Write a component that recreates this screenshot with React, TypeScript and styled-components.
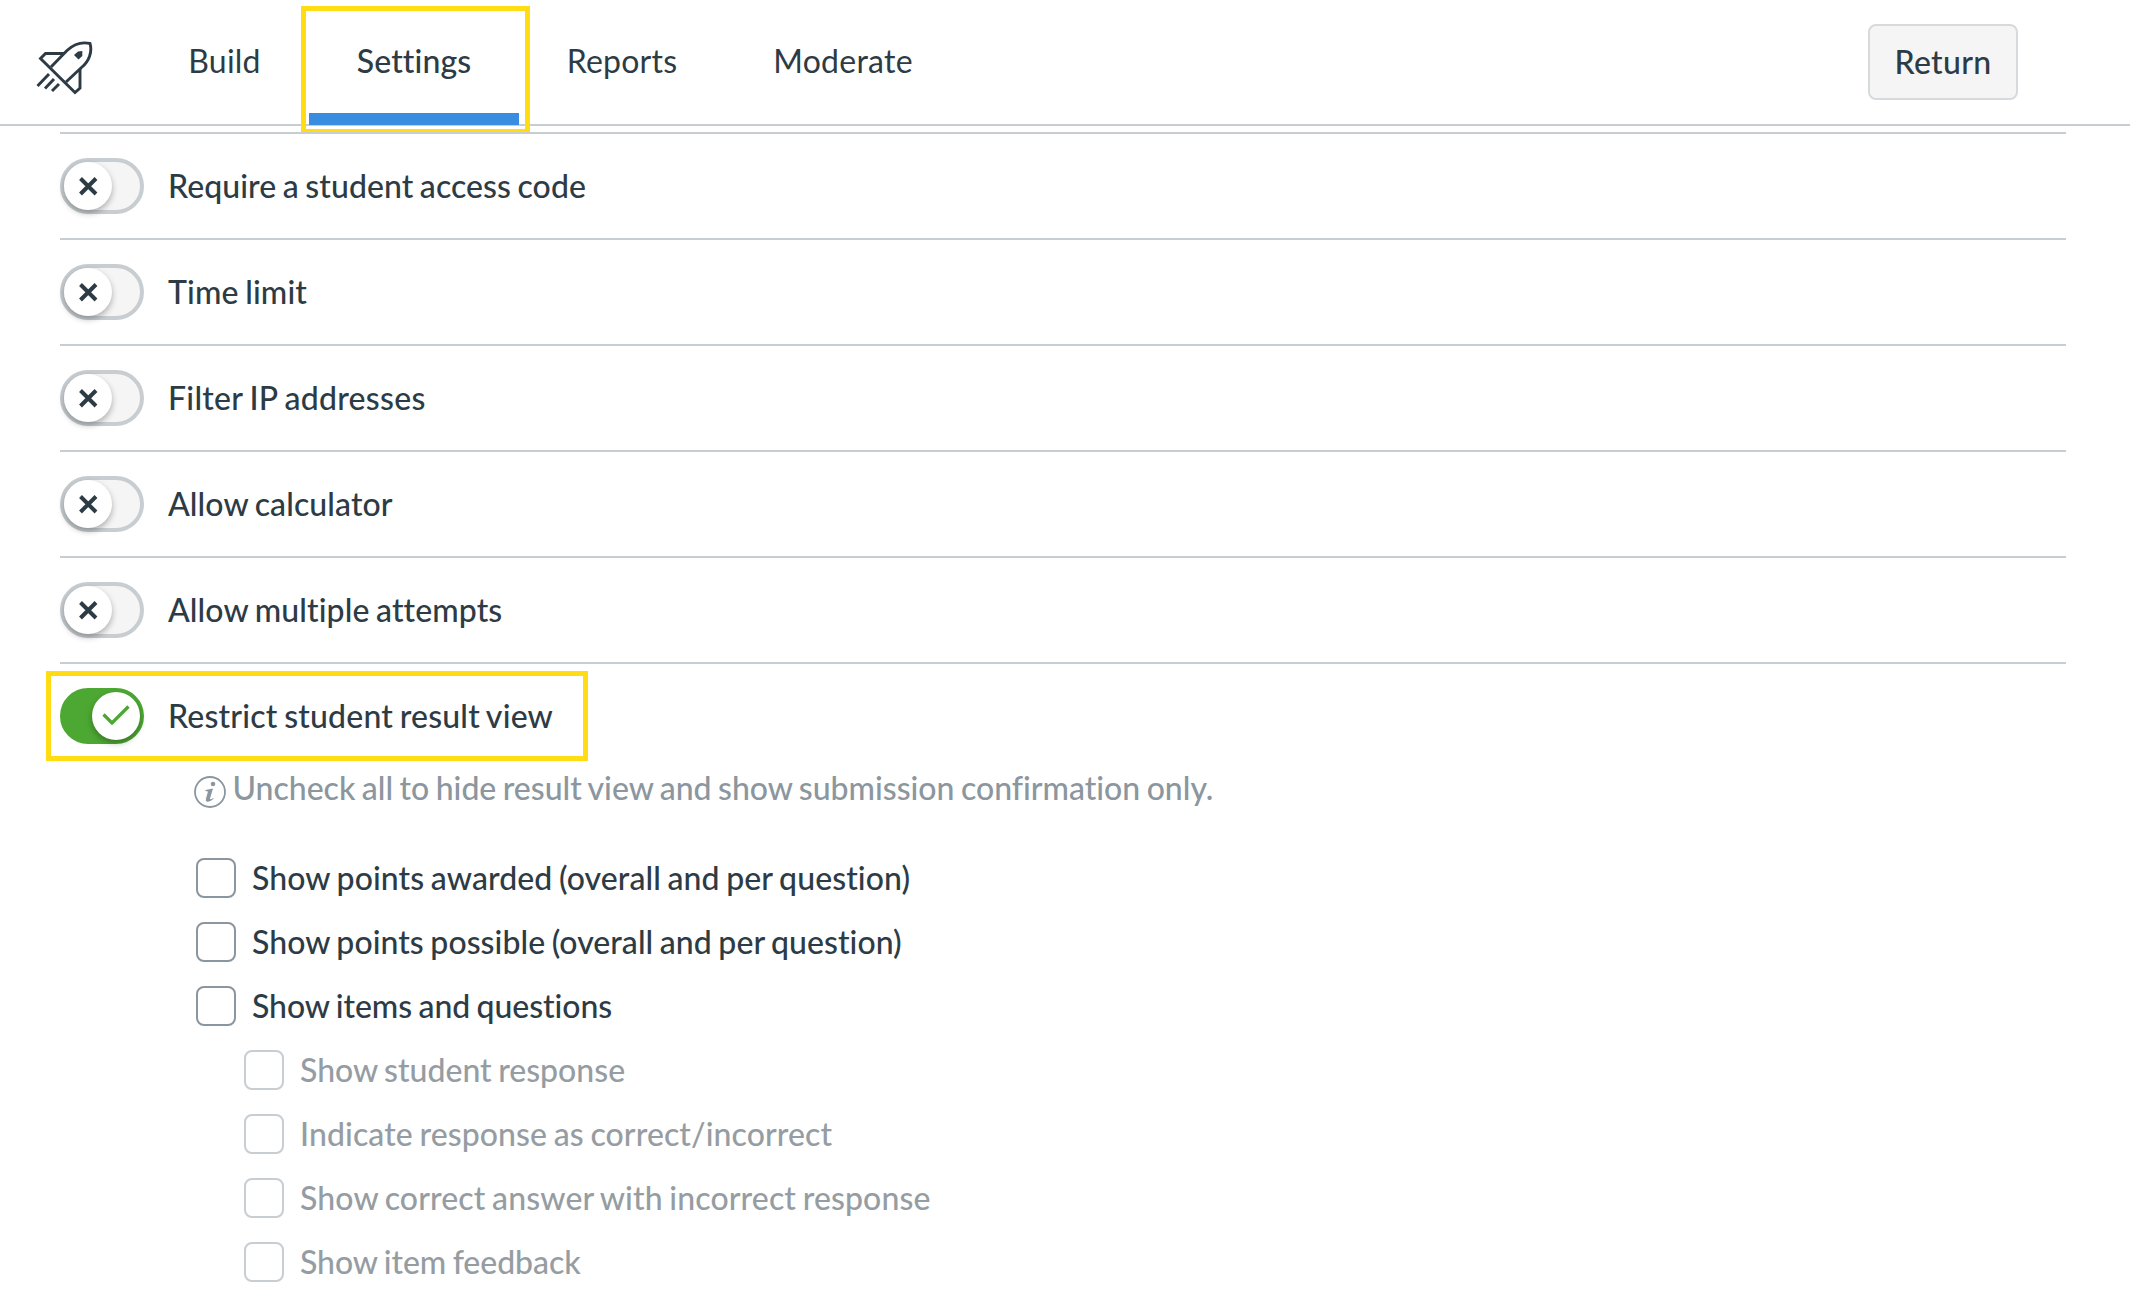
import React from "react";
import styled, { createGlobalStyle } from "styled-components";

const ink = "#2d3b45";
const line = "#c7cdd1";

const GlobalStyle = createGlobalStyle`
  * { box-sizing: border-box; }
  body {
    margin: 0;
    background: #fff;
    color: ${ink};
    font-family: Lato, "Liberation Sans", sans-serif;
    font-size: 32px;
    line-height: 40px;
    font-variant-ligatures: none;
  }
`;

const Page = styled.div`
  width: 2130px;
  height: 1300px;
  overflow: hidden;
`;

const Header = styled.header`
  display: flex;
  height: 126px;
  border-bottom: 2px solid ${line};
  padding: 0 112px 0 36px;
`;

const Logo = styled.svg`
  width: 57px;
  height: 54px;
  margin: 41px 49px 0 0;
`;

const Tabs = styled.nav`
  display: flex;
  flex: 1;
`;

const Tab = styled.div<{ $width: number; $active?: boolean }>`
  position: relative;
  display: flex;
  justify-content: center;
  width: ${(p) => p.$width}px;
  height: 125px;
  padding-top: 41px;
  font-weight: ${(p) => (p.$active ? 500 : 400)};
  border-bottom: 12px solid ${(p) => (p.$active ? "#388de0" : "transparent")};

  &:first-child {
    margin-right: 2px;
  }
`;

const TabHighlight = styled.div`
  position: absolute;
  left: -8px;
  top: 6px;
  width: 229px;
  height: 128px;
  border: 5px solid #ffdc14;
`;

const ReturnButton = styled.button`
  width: 150px;
  height: 76px;
  margin-top: 24px;
  padding: 0;
  border: 2px solid #d7dadc;
  border-radius: 8px;
  background: #f5f5f5;
  color: ${ink};
  font: 500 32px/40px Lato, "Liberation Sans", sans-serif;
  letter-spacing: 0.3px;
`;

const Settings = styled.main`
  margin: 6px 64px 0 60px;
`;

const SettingRow = styled.div`
  position: relative;
  display: flex;
  align-items: center;
  gap: 24px;
  height: 106px;
  border-top: 2px solid ${line};
  font-weight: 500;
`;

const RowHighlight = styled.div`
  position: absolute;
  left: -14px;
  top: 7px;
  width: 542px;
  height: 90px;
  border: 5px solid #ffdc14;
`;

const Track = styled.span<{ $on?: boolean }>`
  display: flex;
  justify-content: ${(p) => (p.$on ? "flex-end" : "flex-start")};
  width: 84px;
  height: 56px;
  border: 4px solid ${(p) => (p.$on ? "#4ca832" : line)};
  border-radius: 28px;
  background: ${(p) => (p.$on ? "#4ca832" : "#f5f5f5")};
`;

const Knob = styled.span`
  display: flex;
  align-items: center;
  justify-content: center;
  width: 48px;
  height: 48px;
  border-radius: 50%;
  background: #fff;
  box-shadow: 0 3px 6px rgba(0, 0, 0, 0.3);
`;

const Hint = styled.div`
  display: flex;
  gap: 6.5px;
  height: 40px;
  margin: 0 0 50px 134px;
  color: #8b969e;
  font-weight: 500;
`;

const InfoIcon = styled.svg`
  width: 32px;
  height: 32px;
  margin-top: 8px;
`;

const Options = styled.div`
  display: flex;
  flex-direction: column;
  gap: 24px;
  padding-left: 136px;
`;

const Option = styled.label<{ $disabled?: boolean }>`
  display: flex;
  align-items: center;
  gap: 16px;
  height: 40px;
  margin-left: ${(p) => (p.$disabled ? 48 : 0)}px;
  color: ${(p) => (p.$disabled ? "#969da2" : ink)};
  font-weight: 500;
`;

const Box = styled.span<{ $disabled?: boolean }>`
  width: 40px;
  height: 40px;
  border: 2px solid ${(p) => (p.$disabled ? line : "#8b969e")};
  border-radius: 8px;
`;

const Label = styled.span<{ $spacing?: number }>`
  letter-spacing: ${(p) => p.$spacing ?? 0}px;
  word-spacing: -1.6px;
  white-space: nowrap;
`;

const Toggle = ({ on }: { on?: boolean }) => (
  <Track $on={on}>
    <Knob>
      {on ? (
        <svg width="28" height="22" viewBox="0 0 28 22" fill="none" stroke="#4ca832" strokeWidth="3.3">
          <path d="M1.5 9.5 10 18 26.5 1.5" />
        </svg>
      ) : (
        <svg width="20" height="20" viewBox="0 0 20 20" fill="none" stroke={ink} strokeWidth="4">
          <path d="M2.5 2.5 18 18M18 2.5 2.5 18" />
        </svg>
      )}
    </Knob>
  </Track>
);

const settings = [
  { text: "Require a student access code", spacing: 0.06 },
  { text: "Time limit", spacing: 0.12 },
  { text: "Filter IP addresses", spacing: 0.29 },
  { text: "Allow calculator", spacing: 0.1 },
  { text: "Allow multiple attempts", spacing: 0.1 },
];

const options = [
  { text: "Show points awarded (overall and per question)", spacing: 0.09 },
  { text: "Show points possible (overall and per question)", spacing: 0.05 },
  { text: "Show items and questions", spacing: -0.06 },
  { text: "Show student response", spacing: 0, disabled: true },
  { text: "Indicate response as correct/incorrect", spacing: 0.1, disabled: true },
  { text: "Show correct answer with incorrect response", spacing: 0.125, disabled: true },
  { text: "Show item feedback", spacing: -0.06, disabled: true },
];

export default function App() {
  return (
    <Page>
      <GlobalStyle />
      <Header>
        <Logo viewBox="36 41 57 54" fill="none" stroke={ink} strokeWidth="2.9">
          <path d="M51 67 67 50.5C74 44 81 41.5 90 43.5 92.5 52 89 61 82 67L66 82" />
          <path d="M64 53.5H45.5L40.5 58.5 75 92.5 80 88V69" />
          <path d="M49 74 37.5 86M54 79 45 88.5M59 84 52 91" />
          <path d="M74 55 78 51.5 82.3 51 82.3 56 78.5 59.5Z" fill={ink} stroke="none" />
        </Logo>
        <Tabs>
          <Tab $width={165}><Label $spacing={0.25}>Build</Label></Tab>
          <Tab $width={210} $active>
            <Label $spacing={0.1}>Settings</Label>
            <TabHighlight />
          </Tab>
          <Tab $width={206}><Label $spacing={0.25}>Reports</Label></Tab>
          <Tab $width={236}><Label $spacing={0.25}>Moderate</Label></Tab>
        </Tabs>
        <ReturnButton>Return</ReturnButton>
      </Header>
      <Settings>
        {settings.map((s) => (
          <SettingRow key={s.text}>
            <Toggle />
            <Label $spacing={s.spacing}>{s.text}</Label>
          </SettingRow>
        ))}
        <SettingRow>
          <Toggle on />
          <Label $spacing={0.19}>Restrict student result view</Label>
          <RowHighlight />
        </SettingRow>
        <Hint>
          <InfoIcon viewBox="0 0 32 32" fill="none" stroke="#8b969e" strokeWidth="1.8">
            <circle cx="16" cy="16" r="15" />
            <circle cx="19" cy="8" r="2.3" fill="#8b969e" stroke="none" />
            <path d="M11.5 14 19 12.5 16 22.5Q15.7 24.3 19.5 22L19.7 22.8Q15.5 26.5 12.7 25.5 11.2 24.8 12 22.5L14 15.5 11.4 15Z" fill="#8b969e" stroke="none" />
          </InfoIcon>
          <Label $spacing={-0.01}>Uncheck all to hide result view and show submission confirmation only.</Label>
        </Hint>
        <Options>
          {options.map((o) => (
            <Option key={o.text} $disabled={o.disabled}>
              <Box $disabled={o.disabled} />
              <Label $spacing={o.spacing}>{o.text}</Label>
            </Option>
          ))}
        </Options>
      </Settings>
    </Page>
  );
}
